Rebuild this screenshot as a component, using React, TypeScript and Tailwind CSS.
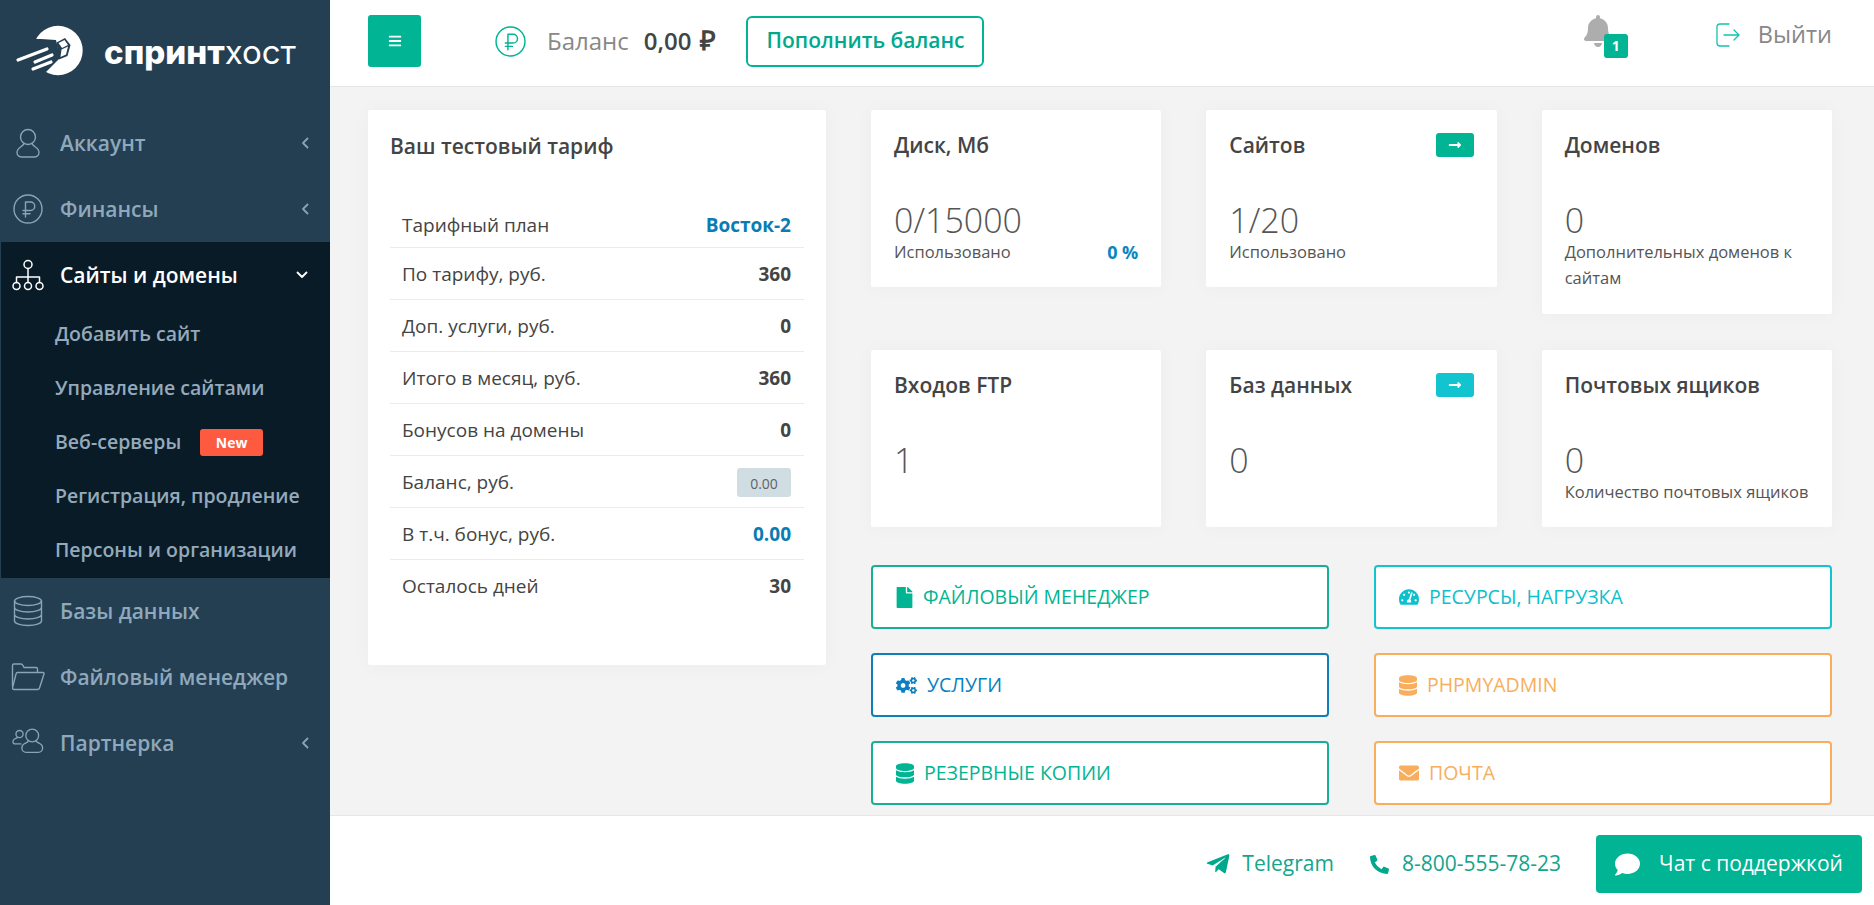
import React from "react";
import { FaFile, FaCogs, FaDatabase, FaTachometerAlt, FaEnvelope, FaTelegramPlane, FaPhoneAlt, FaComment, FaBell, FaLongArrowAltRight, FaBars } from "react-icons/fa";

const Thin = ({ children, w = 34, h = 34, vb = "0 0 34 34", stroke = "#8ba3b6", sw = 1.4 }: any) => (
  <svg width={w} height={h} viewBox={vb} fill="none" stroke={stroke} strokeWidth={sw} strokeLinecap="round" strokeLinejoin="round" className="shrink-0">
    {children}
  </svg>
);

const UserI = () => (
  <Thin w={24} h={30} vb="0 0 24 30">
    <circle cx="12" cy="9" r="7.500" />
    <path d="M8 15.500C7 19 1 19 1 24.500 1 27.500 3.500 29 6 29H18C20.500 29 23 27.500 23 24.500 23 19 17 19 16 15.500" />
  </Thin>
);
const RubleI = ({ stroke = "#8ba3b6", s = 30 }: any) => (
  <Thin w={s} h={s} vb="0 0 30 30" stroke={stroke}>
    <circle cx="15" cy="15" r="14" />
    <path d="M12.500 23V8h5a4 4 0 0 1 0 8.500h-7.500M10 19.700h7" />
  </Thin>
);
const SiteI = () => (
  <Thin vb="0 0 34 34" stroke="#ffffff" sw={1.5}>
    <circle cx="17" cy="6.500" r="4" />
    <path d="M17 10.500V19M5.500 24.500V19h23v5.500M17 19v5.500" />
    <circle cx="5.500" cy="28" r="3.500" />
    <circle cx="17" cy="28" r="3.500" />
    <circle cx="28.500" cy="28" r="3.500" />
  </Thin>
);
const DbI = () => (
  <Thin>
    <ellipse cx="17" cy="7" rx="13.500" ry="4.500" />
    <path d="M3.500 7v20c0 2.500 6 4.500 13.500 4.500S30.500 29.500 30.500 27V7M3.500 13.500c0 2.500 6 4.500 13.500 4.500s13.500-2 13.500-4.500M3.500 20.500c0 2.500 6 4.500 13.500 4.500s13.500-2 13.500-4.500" />
  </Thin>
);
const FolderI = () => (
  <Thin vb="0 0 34 30" h={30}>
    <path d="M1.500 24V3.500c0-1 .8-1.500 1.500-1.500h7c1 0 1.500.5 2 1.500l1 2h12c1 0 1.500.7 1.500 1.500v3" />
    <path d="M6.500 10.500h25.500c.8 0 1.300.6 1 1.500l-4.500 14c-.3 1-1 1.500-2 1.500H3c-1 0-1.600-.8-1.400-1.800L5 12c.2-1 .7-1.500 1.500-1.500z" />
  </Thin>
);
const UsersI = () => (
  <Thin w={32} h={32}>
    <circle cx="8" cy="7.500" r="3.800" />
    <path d="M6 11c-.5 1-2 1-3 1.500-1.500.8-2 2-2 3.200 0 1.300 1 2.300 2.500 2.300h6" />
    <circle cx="21.500" cy="9" r="6.800" />
    <path d="M17.500 14.500c-.6 1.600-2 2-4 3-2 1-3 2.800-3 4.800 0 2.700 2 4.700 4.500 4.700h13c2.500 0 4.500-2 4.500-4.700 0-2-1-3.800-3-4.800-2-1-3.400-1.400-4-3" />
  </Thin>
);
const Chev = ({ open }: { open?: boolean }) => (
  <svg width="14" height="14" viewBox="0 0 14 14" fill="none" stroke={open ? "#fff" : "#8ba3b6"} strokeWidth="1.800" strokeLinecap="round" strokeLinejoin="round">
    {open ? <path d="M2.500 4.500 7 9l4.500-4.500" /> : <path d="M9.500 2.500 5 7l4.500 4.500" />}
  </svg>
);

const Logo = () => (
  <svg width="76" height="52" viewBox="0 0 76 52" className="shrink-0">
    <circle cx="48" cy="25.500" r="24.700" fill="#fff" />
    <polygon points="31,14 46,15 50,33 36,47 20,52 5,40 15,14" fill="#243f52" />
    <polygon points="46.500,17.500 55,13 60.500,20 57.500,31 49,34.500" fill="#243f52" />
    <polygon points="48.500,18 54.500,15 58,20 52,23" fill="#fff" />
    <polygon points="51.500,24.500 58,21.500 56,29.500 50.500,32" fill="#fff" />
    <path d="M8 35 L37 24 M25 37 L42 30 M23 44 L41 37" stroke="#fff" strokeWidth="3.200" fill="none" strokeLinecap="round" />
  </svg>
);

const Nav = ({ icon, label, chev }: any) => (
  <div className="h-[66px] flex items-center pl-[12px] pr-[18px] text-[21px] font-semibold text-[#8fa8bb]">
    <span className="w-[32px] flex justify-center mr-[16px]">{icon}</span>
    <span className="flex-1 pt-[2px]">{label}</span>
    {chev && <Chev />}
  </div>
);

const Sub = ({ children }: any) => (
  <div className="h-[54px] flex items-center pl-[54px] pb-[2px] text-[19.5px] font-semibold text-[#94aabb]">{children}</div>
);

const Row = ({ label, children, last, first }: any) => (
  <div className={`flex items-center justify-between pl-[12px] pr-[13px] text-[19px] text-[#444] ${first ? "h-[44px]" : "h-[52px]"} ${last ? "" : "border-b border-[#e9ecef]"} ${first || last ? "" : "pt-[2px]"}`}>
    <span>{label}</span>
    <span>{children}</span>
  </div>
);

const Card = ({ title, arrow, value, sub, pct, className = "" }: any) => (
  <div className={`bg-white rounded-[2px] shadow-[0_0_20px_rgba(0,0,0,0.03)] px-[23px] pt-[23px] self-start ${className}`}>
    <div className="flex items-center justify-between h-[26px]">
      <span className="text-[21px] font-semibold text-[#444]">{title}</span>
      {arrow && (
        <span className={`w-[38px] h-[24px] -mt-[2px] rounded-[3px] flex items-center justify-center text-white text-[14px] ${arrow}`}>
          <FaLongArrowAltRight />
        </span>
      )}
    </div>
    <div className="mt-[38px] text-[34px] font-light leading-[46px] text-[#555]">{value}</div>
    <div className="flex justify-between items-start">
      {sub && <div className="text-[16.5px] leading-[18px] text-[#555]">{sub}</div>}
      {pct && <div className="text-[18px] font-bold leading-[18px] text-[#0a86bf]">{pct}</div>}
    </div>
  </div>
);

const Act = ({ icon, label, cls }: any) => (
  <div className={`h-[64px] bg-white border-2 rounded-[4px] flex items-center pl-[23px] gap-[10px] text-[19.5px] ${cls}`}>
    {icon}
    <span>{label}</span>
  </div>
);

export default function App() {
  return (
    <div className="flex h-screen w-full overflow-hidden font-['Open_Sans',sans-serif] bg-white">
      <aside className="w-[330px] shrink-0 bg-[#243f52] flex flex-col">
        <div className="h-[110px] shrink-0 flex items-start pl-[10px] pt-[25px]">
          <Logo />
          <div className="ml-[18px] mt-[12px] text-[33px] leading-[30px] text-white font-['Inter',sans-serif] flex">
            <span className="font-extrabold">спринт</span>
            <span className="font-normal">хост</span>
          </div>
        </div>
        <Nav icon={<UserI />} label="Аккаунт" chev />
        <Nav icon={<RubleI />} label="Финансы" chev />
        <div className="bg-[#0a1b28] ml-px">
          <div className="h-[66px] flex items-center pl-[11px] pr-[21px] text-[21px] font-semibold text-white">
            <span className="w-[32px] flex justify-center mr-[16px]"><SiteI /></span>
            <span className="flex-1 pt-[2px]">Сайты и домены</span>
            <Chev open />
          </div>
          <Sub>Добавить сайт</Sub>
          <Sub>Управление сайтами</Sub>
          <Sub>
            Веб-серверы
            <span className="ml-[19px] w-[63px] h-[27px] rounded-[3px] bg-[#fd5a40] text-white text-[14px] font-bold flex items-center justify-center">New</span>
          </Sub>
          <Sub>Регистрация, продление</Sub>
          <Sub>Персоны и организации</Sub>
        </div>
        <Nav icon={<DbI />} label="Базы данных" />
        <Nav icon={<FolderI />} label="Файловый менеджер" />
        <Nav icon={<UsersI />} label="Партнерка" chev />
      </aside>

      <div className="flex-1 flex flex-col min-w-0">
        <header className="h-[87px] shrink-0 bg-white border-b border-[#e6e6e6] flex items-center pl-[38px] pr-[42px] pb-[4px]">
          <button className="w-[53px] h-[52px] rounded-[3px] bg-[#00b494] text-white flex items-center justify-center text-[14px]">
            <FaBars />
          </button>
          <span className="ml-[74px]"><RubleI stroke="#00b494" s={31} /></span>
          <span className="ml-[21px] text-[24px] text-[#888]">Баланс</span>
          <span className="ml-[15px] text-[24px] font-semibold text-[#444] flex items-baseline">
            0,00
            <span className="ml-[9px] text-[27px] leading-[27px]">₽</span>
          </span>
          <button className="ml-[30px] w-[238px] h-[51px] rounded-[6px] border-2 border-[#00b494] text-[#00a98c] text-[21px] font-semibold">
            Пополнить баланс
          </button>
          <div className="ml-auto relative w-[46px] h-[44px] -mt-[9px] mr-[88px]">
            <FaBell className="text-[#adadad] text-[32px] absolute left-0 top-0" />
            <span className="absolute left-[22px] top-[19px] w-[24px] h-[24px] rounded-[3px] bg-[#00b494] text-white text-[14px] font-bold flex items-center justify-center">1</span>
          </div>
          <div className="flex items-center -mt-[13px]">
            <svg width="24" height="24" viewBox="0 0 24 24" fill="none" stroke="#12c4b0" strokeWidth="1.300" strokeLinecap="round" strokeLinejoin="round">
              <path d="M13 1H4a3 3 0 0 0-3 3v16a3 3 0 0 0 3 3h9M8 12h15M18 7l5 5-5 5" />
            </svg>
            <span className="ml-[18px] text-[23.5px] text-[#888]">Выйти</span>
          </div>
        </header>

        <main className="flex-1 min-h-0 overflow-hidden bg-[#f3f3f3] pl-[38px] pr-[42px] pt-[23px]">
          <div className="grid grid-cols-[458px_1fr] gap-x-[45px]">
            <section className="bg-white rounded-[2px] shadow-[0_0_20px_rgba(0,0,0,0.03)] h-[555px] px-[22px] pt-[23px]">
              <div className="text-[21px] font-semibold text-[#444] leading-[26px]">Ваш тестовый тариф</div>
              <div className="mt-[45px]">
                <Row first label="Тарифный план"><b className="text-[#0a7cb4] font-bold">Восток-2</b></Row>
                <Row label="По тарифу, руб."><b className="font-bold">360</b></Row>
                <Row label="Доп. услуги, руб."><b className="font-bold">0</b></Row>
                <Row label="Итого в месяц, руб."><b className="font-bold">360</b></Row>
                <Row label="Бонусов на домены"><b className="font-bold">0</b></Row>
                <Row label="Баланс, руб.">
                  <span className="block w-[54px] h-[29px] rounded-[3px] bg-[#d0dde2] text-[#5c6468] text-[14px] text-center leading-[31px]">0.00</span>
                </Row>
                <Row label="В т.ч. бонус, руб."><b className="text-[#0a7cb4] font-bold">0.00</b></Row>
                <Row last label="Осталось дней"><b className="font-bold">30</b></Row>
              </div>
            </section>

            <div className="min-w-0">
              <div className="grid grid-cols-3 gap-x-[45px] h-[240px]">
                <Card className="h-[177px]" title="Диск, Мб" value="0/15000" sub="Использовано" pct="0 %" />
                <Card className="h-[177px]" title="Сайтов" arrow="bg-[#00b494]" value="1/20" sub="Использовано" />
                <Card className="h-[204px]" title="Доменов" value="0" sub={<span className="block leading-[26px] -mt-[4px]">Дополнительных доменов к сайтам</span>} />
              </div>
              <div className="grid grid-cols-3 gap-x-[45px] h-[215px]">
                <Card className="h-[177px]" title="Входов FTP" value="1" />
                <Card className="h-[177px]" title="Баз данных" arrow="bg-[#12c4cf]" value="0" />
                <Card className="h-[177px]" title="Почтовых ящиков" value="0" sub="Количество почтовых ящиков" />
              </div>
              <div className="grid grid-cols-2 gap-x-[45px] gap-y-[24px]">
                <Act icon={<FaFile className="w-[17px] h-[21px]" />} label="ФАЙЛОВЫЙ МЕНЕДЖЕР" cls="border-[#17b097] text-[#00b494]" />
                <Act icon={<FaTachometerAlt className="w-[20px] h-[18px]" />} label="РЕСУРСЫ, НАГРУЗКА" cls="border-[#12c4cf] text-[#0cc0cc]" />
                <Act icon={<FaCogs className="w-[21px] h-[17px]" />} label="УСЛУГИ" cls="border-[#0f7fb9] text-[#0a7fc2]" />
                <Act icon={<FaDatabase className="w-[18px] h-[21px]" />} label="PHPMYADMIN" cls="border-[#f8ae5d] text-[#f8ae5d]" />
                <Act icon={<FaDatabase className="w-[18px] h-[21px]" />} label="РЕЗЕРВНЫЕ КОПИИ" cls="border-[#17b097] text-[#00b494]" />
                <Act icon={<FaEnvelope className="w-[20px] h-[20px]" />} label="ПОЧТА" cls="border-[#f8ae5d] text-[#f8ae5d]" />
              </div>
            </div>
          </div>
        </main>

        <footer className="h-[90px] shrink-0 bg-white border-t border-[#e6e6e6] flex items-center justify-end pr-[12px] pt-[7px] text-[21px] text-[#14a58c]">
          <FaTelegramPlane className="text-[26px] text-[#00a98c]" />
          <span className="ml-[11px]">Telegram</span>
          <FaPhoneAlt className="ml-[36px] text-[19px] text-[#00a98c]" />
          <span className="ml-[13px]">8-800-555-78-23</span>
          <button className="ml-[35px] w-[266px] h-[58px] rounded-[4px] bg-[#00b494] text-white flex items-center justify-center gap-[19px]">
            <FaComment className="text-[25px]" />
            Чат с поддержкой
          </button>
        </footer>
      </div>
    </div>
  );
}
